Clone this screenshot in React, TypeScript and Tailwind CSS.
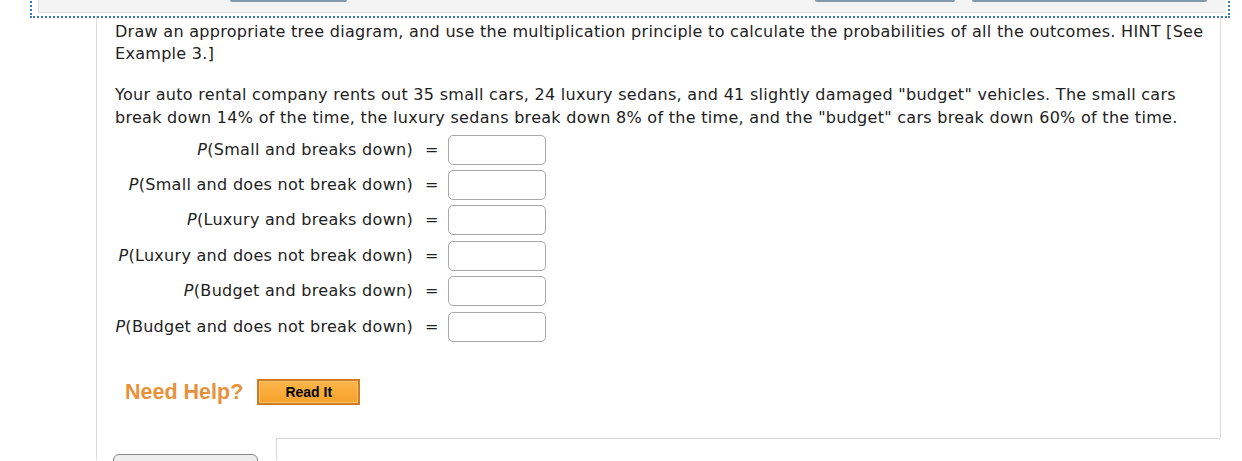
const rows = [
  "Small and breaks down",
  "Small and does not break down",
  "Luxury and breaks down",
  "Luxury and does not break down",
  "Budget and breaks down",
  "Budget and does not break down",
];

export default function App() {
  return (
    <div className="w-[1242px] h-[461px] overflow-hidden bg-white font-['DejaVu_Sans',sans-serif] text-[#222]">
      {/* toolbar strip with focus outline */}
      <div className="mt-[1px] ml-[32px] w-[1196px] h-[16px] outline-2 outline-dotted outline-[#3d78bd]">
        <div className="-mt-[1px] ml-[6px] mr-[2px] h-[13px] flex bg-[#f4f4f4] border-l border-b border-[#e0e0e0]">
          <div className="ml-[191px] w-[117px] h-[2px] rounded-b-[2px] bg-[#8199ad]" />
          <div className="ml-[468px] w-[140px] h-[2px] rounded-b-[2px] bg-[#8199ad]" />
          <div className="ml-[17px] w-[235px] h-[2px] rounded-b-[2px] bg-[#8199ad]" />
        </div>
      </div>

      <div className="ml-[96px] w-[1125px] border-l border-[#ddd]">
        <div className="h-[422px] border-r border-[#ddd] pt-[5px] pl-[18px] text-[16px] leading-[22px] tracking-[0.29px]">
          <div className="w-[1100px]">
            <p>
              Draw an appropriate tree diagram, and use the multiplication principle to calculate the probabilities
              of all the outcomes. HINT [See Example 3.]
            </p>
            <p className="mt-[18px] leading-[23px]">
              Your auto rental company rents out 35 small cars, 24 luxury sedans, and 41 slightly damaged "budget"
              vehicles. The small cars break down 14% of the time, the luxury sedans break down 8% of the time, and
              the "budget" cars break down 60% of the time.
            </p>
          </div>

          <div className="mt-[3px]">
            {rows.map((r) => (
              <div key={r} className="h-[35.4px] flex items-center">
                <span className="w-[298px] text-right">
                  <i>P</i>({r})
                </span>
                <span className="ml-[12px]">=</span>
                <input
                  readOnly
                  className="ml-[9px] w-[98px] h-[30px] border border-[#a9a9a9] rounded-[5px] bg-white"
                />
              </div>
            ))}
          </div>

          <div className="mt-[35px] h-[26px] flex items-center font-['Liberation_Sans',Arial,sans-serif] tracking-normal">
            <span className="ml-[10px] text-[21.5px] font-bold text-[#e8913a]">Need Help?</span>
            <button className="ml-[14px] w-[103px] h-[26px] border-2 border-[#cf7a24] bg-gradient-to-b from-[#fbb548] to-[#f7a12a] text-[14px] font-bold text-black shadow-[inset_0_0_0_1px_#fcc36a]">
              Read It
            </button>
          </div>
        </div>

        <div className="h-[22px] flex">
          <div className="w-[179px]">
            <button className="mt-[16px] ml-[16px] w-[145px] h-[26px] rounded-[6px] border border-[#888] bg-[#eee] text-[13px]">
              Submit Answer
            </button>
          </div>
          <div className="flex-1 border-t border-l border-[#d6d6d6] rounded-tr-[3px]" />
        </div>
      </div>
    </div>
  );
}
